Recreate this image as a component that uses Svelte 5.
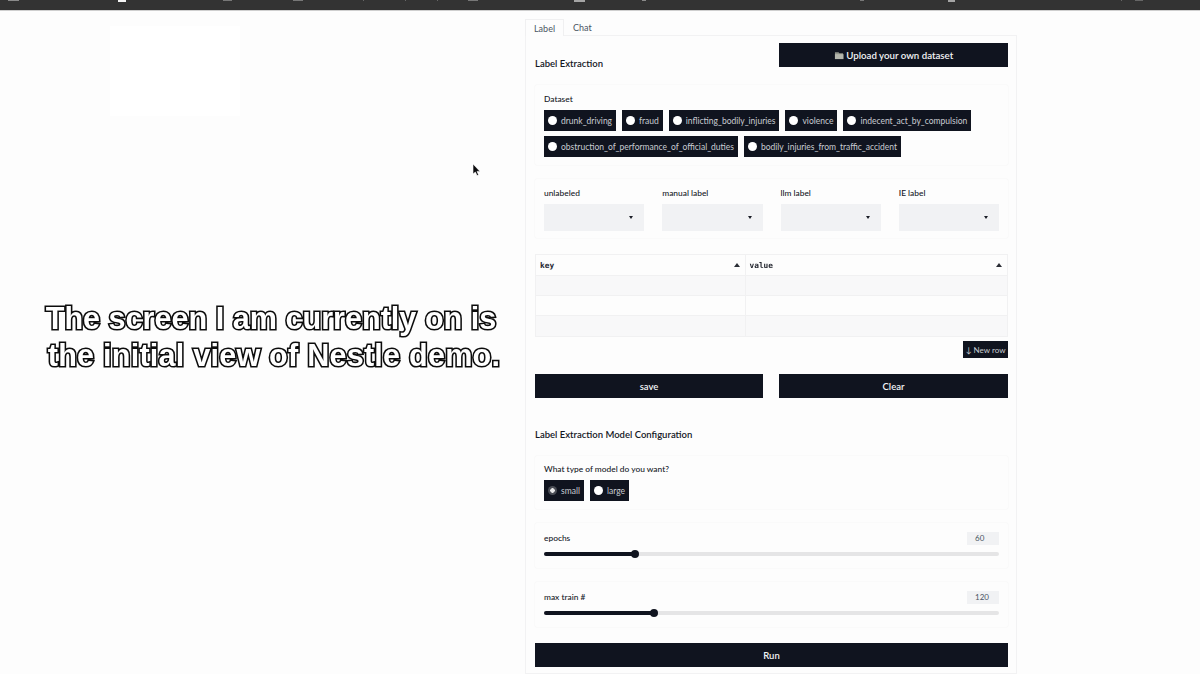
<script>
  const datasets = [
    'drunk_driving',
    'fraud',
    'inflicting_bodily_injuries',
    'violence',
    'indecent_act_by_compulsion',
    'obstruction_of_performance_of_official_duties',
    'bodily_injuries_from_traffic_accident'
  ]
  const selects = ['unlabeled', 'manual label', 'llm label', 'IE label']
  const rows = [0, 1, 2]
  const models = [
    { name: 'small', checked: true },
    { name: 'large', checked: false }
  ]
  const sliders = [
    { label: 'epochs', value: 60, fill: 20 },
    { label: 'max train #', value: 120, fill: 24.2 }
  ]
  // bottoms of the toolbar icons, cut off by the capture
  const marks = [
    { x: 8, w: 11, h: 1, c: '#8a8a8a' },
    { x: 118, w: 8, h: 2, c: '#f4f4f4' },
    { x: 223, w: 9, h: 1, c: '#777777' },
    { x: 293, w: 10, h: 1, c: '#777777' },
    { x: 363, w: 1, h: 1, c: '#666666' },
    { x: 405, w: 1, h: 1, c: '#666666' },
    { x: 437, w: 1, h: 1, c: '#666666' },
    { x: 468, w: 10, h: 1, c: '#777777' },
    { x: 574, w: 11, h: 2, c: '#a5a5a5' },
    { x: 642, w: 4, h: 1, c: '#8a8a8a' },
    { x: 860, w: 4, h: 1, c: '#777777' },
    { x: 948, w: 7, h: 2, c: '#a5a5a5' },
    { x: 1121, w: 1, h: 1, c: '#666666' },
    { x: 1135, w: 8, h: 1, c: '#666666' }
  ]
</script>

<div class="topbar">
  {#each marks as mark}
    <i class="mark" style="left: {mark.x}px; width: {mark.w}px; height: {mark.h}px; background: {mark.c}"></i>
  {/each}
</div>

<main class="page">
  <section class="video">
    <div class="blank"></div>
    <p class="caption">
      <span>The screen I am currently on is</span>
      <span class="second">the initial view of Nestle demo.</span>
    </p>
  </section>

  <section class="demo">
    <nav class="tabs">
      <span class="tab active">Label</span>
      <span class="tab">Chat</span>
    </nav>

    <div class="panel">
      <div class="two head-row">
        <h2>Label Extraction</h2>
        <button class="btn upload">
          <svg width="10" height="9" viewBox="0 0 11 10"><path d="M1 1.500h4l1 1h4v6.500H1z" fill="#8f9289" /><path d="M1 3.500h9.500v5.500H1z" fill="#b4b6ac" /></svg>
          Upload your own dataset
        </button>
      </div>

      <div class="card dataset">
        <div class="label">Dataset</div>
        <div class="chips">
          {#each datasets as name}
            <span class="chip"><i class="dot"></i>{name}</span>
          {/each}
        </div>
      </div>

      <div class="card filters">
        {#each selects as name}
          <div class="filter">
            <div class="label">{name}</div>
            <div class="select"><i class="caret"></i></div>
          </div>
        {/each}
      </div>

      <div class="table">
        <div class="cell th">key<i class="sort"></i></div>
        <div class="cell th">value<i class="sort"></i></div>
        {#each rows as row}
          <div class="cell" class:odd={row !== 1}></div>
          <div class="cell" class:odd={row !== 1}></div>
        {/each}
      </div>

      <div class="row-actions">
        <button class="btn new-row">↓ New row</button>
      </div>

      <div class="two actions">
        <button class="btn big">save</button>
        <button class="btn big">Clear</button>
      </div>

      <h2 class="config-title">Label Extraction Model Configuration</h2>

      <div class="card model">
        <div class="label">What type of model do you want?</div>
        <div class="chips">
          {#each models as model}
            <span class="chip"><i class="dot" class:checked={model.checked}></i>{model.name}</span>
          {/each}
        </div>
      </div>

      {#each sliders as slider}
        <div class="card slider">
          <div class="slider-top">
            <div class="label">{slider.label}</div>
            <div class="number">{slider.value}</div>
          </div>
          <div class="track">
            <div class="fill" style="width: {slider.fill}%"><i class="thumb"></i></div>
          </div>
        </div>
      {/each}

      <button class="btn big run">Run</button>
    </div>
  </section>

  <svg class="cursor" width="9" height="14" viewBox="0 0 9 14">
    <path d="M1 1v10l2.400-2 1.600 3.600 1.600-.7-1.600-3.500h3z" fill="#0b0b0d" stroke="#fff" stroke-width=".6" />
  </svg>
</main>

<style>
  :global(body) {
    margin: 0;
    background: #fdfdfd;
  }

  .topbar {
    position: relative;
    height: 11px;
    background: #333333;
    border-bottom: 1px solid #cfcfcf;
    box-sizing: border-box;
  }

  .mark {
    position: absolute;
    top: 0;
  }

  .page {
    position: relative;
    display: flex;
    height: 663px;
    overflow: hidden;
    font-family: Lato, "Noto Sans", sans-serif;
    color: #1a1d26;
  }

  .video {
    width: 525px;
    flex: none;
    padding-top: 15px;
    box-sizing: border-box;
  }

  .blank {
    width: 130px;
    height: 90px;
    margin-left: 110px;
    background: #ffffff;
  }

  .caption {
    margin: 184px 0 0;
    width: 542px;
    text-align: center;
    font-family: "Liberation Sans", Arial, sans-serif;
    font-size: 30.600px;
    font-weight: 700;
    line-height: 37px;
    color: #ffffff;
    -webkit-text-stroke: 3.200px #0c0c0c;
    paint-order: stroke fill;
    will-change: opacity;
  }

  .caption span {
    display: block;
  }

  .caption .second {
    padding-left: 6px;
    letter-spacing: 0.22px;
  }

  .demo {
    width: 492px;
    flex: none;
    padding-top: 8px;
  }

  .tabs {
    display: flex;
    height: 17px;
    font-size: 9px;
    color: #4b5563;
  }

  .tab {
    padding: 0 9px;
    line-height: 17px;
  }

  .tab.active {
    padding: 0 8px;
    background: #fdfdfd;
    border: 1px solid #f0f0f1;
    border-bottom: 0;
    position: relative;
    z-index: 1;
  }

  .panel {
    height: 639px;
    margin-top: -1px;
    padding: 7px 8px 0 9px;
    border: 1px solid #f2f2f3;
    box-sizing: border-box;
    display: flex;
    flex-direction: column;
  }

  .two {
    display: grid;
    grid-template-columns: 228px 229px;
    gap: 16px;
  }

  .head-row {
    height: 24px;
  }

  h2 {
    margin: 0;
    font-size: 9.500px;
    font-weight: 600;
    line-height: 12px;
    color: #14171f;
  }

  .head-row h2 {
    align-self: end;
    transform: translateY(3px);
  }

  .btn {
    border: 0;
    padding: 0;
    background: #10141f;
    color: #f2f3f5;
    font-family: inherit;
    font-weight: 600;
  }

  .upload {
    height: 24px;
    font-size: 9.700px;
  }

  .upload svg {
    vertical-align: -1px;
  }

  .card {
    background: #fdfdfd;
    box-shadow: 0 0 2px rgba(0, 0, 0, 0.06);
    border-radius: 2px;
    padding: 0 9px;
  }

  .label {
    font-size: 8.400px;
    font-weight: 500;
    line-height: 10px;
    color: #14171f;
  }

  .dataset {
    height: 80px;
    margin-top: 18px;
    padding-top: 9px;
    box-sizing: border-box;
  }

  .chips {
    display: flex;
    flex-wrap: wrap;
    gap: 5px 6px;
    margin-top: 6px;
  }

  .chip {
    display: flex;
    align-items: center;
    gap: 4px;
    height: 21px;
    padding: 0 4px;
    background: #10141f;
    color: #c9ccd2;
    font-size: 8.500px;
  }

  .dot {
    width: 9px;
    height: 9px;
    border-radius: 50%;
    background: #ffffff;
  }

  .dot.checked {
    background: radial-gradient(circle, #e8e8e8 0 2px, #4a4d55 2.500px);
  }

  .filters {
    display: grid;
    grid-template-columns: repeat(4, 1fr);
    gap: 18px;
    height: 59px;
    margin-top: 14px;
    padding-top: 9px;
    box-sizing: border-box;
  }

  .select {
    position: relative;
    height: 27px;
    margin-top: 6px;
    background: #f1f2f4;
  }

  .caret {
    position: absolute;
    right: 11px;
    top: 12px;
    border: 2.500px solid transparent;
    border-top: 3px solid #1a1d26;
    border-bottom: 0;
  }

  .table {
    display: grid;
    grid-template-columns: 209.500px 1fr;
    grid-template-rows: 21px repeat(3, 20px);
    margin-top: 16px;
    border: 1px solid #f1f1f2;
  }

  .cell {
    position: relative;
    border-bottom: 1px solid #f1f1f2;
    box-sizing: border-box;
  }

  .cell:nth-child(odd) {
    border-right: 1px solid #f1f1f2;
  }

  .cell:nth-last-child(-n + 2) {
    border-bottom: 0;
  }

  .th {
    padding-left: 4px;
    font-family: "DejaVu Sans Mono", monospace;
    font-size: 7.800px;
    font-weight: 700;
    line-height: 21px;
    color: #22252e;
  }

  .odd {
    background: #f8f8f9;
  }

  .sort {
    position: absolute;
    right: 5px;
    top: 8px;
    border: 3px solid transparent;
    border-bottom: 4px solid #2a2d35;
    border-top: 0;
  }

  .row-actions {
    display: flex;
    justify-content: flex-end;
    margin-top: 4px;
  }

  .new-row {
    width: 45px;
    height: 17px;
    font-size: 8px;
    font-weight: 400;
    color: #c9ccd2;
    white-space: nowrap;
  }

  .actions {
    margin-top: 16px;
  }

  .big {
    height: 24px;
    font-size: 9.500px;
  }

  .config-title {
    margin-top: 31px;
  }

  .model {
    height: 53px;
    margin-top: 15px;
    padding-top: 8px;
    box-sizing: border-box;
  }

  .slider {
    height: 45px;
    margin-top: 14px;
    padding-top: 9px;
    box-sizing: border-box;
  }

  .slider .label {
    margin-top: 1px;
  }

  .slider-top {
    display: flex;
    justify-content: space-between;
    align-items: flex-start;
    height: 17px;
  }

  .number {
    width: 32px;
    height: 13px;
    background: #f1f2f4;
    font-size: 8px;
    line-height: 13px;
    text-indent: 8px;
    color: #4b5563;
  }

  .track {
    height: 4px;
    margin-top: 3px;
    border-radius: 2px;
    background: #e5e5e6;
  }

  .fill {
    position: relative;
    height: 4px;
    border-radius: 2px;
    background: #10141f;
  }

  .thumb {
    position: absolute;
    right: -4px;
    top: -2px;
    width: 8px;
    height: 8px;
    border-radius: 50%;
    background: #10141f;
  }

  .run {
    flex: none;
    margin-top: 16px;
  }

  .cursor {
    position: absolute;
    left: 472px;
    top: 152px;
  }
</style>
